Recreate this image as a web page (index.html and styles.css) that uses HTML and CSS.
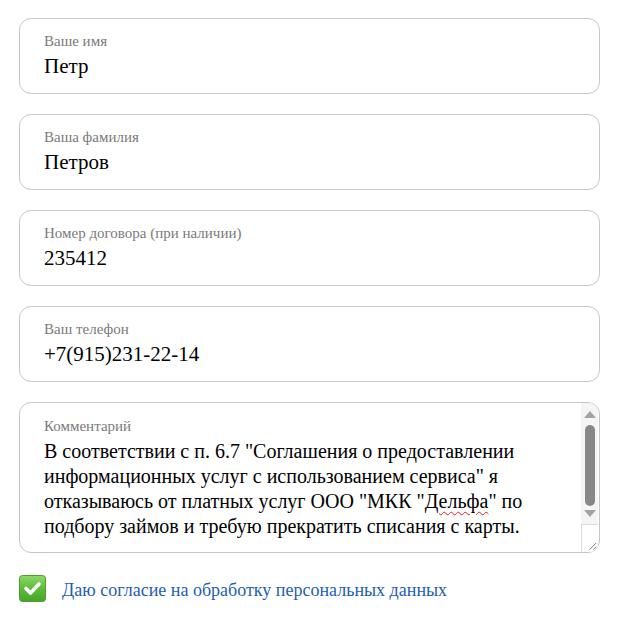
FILE: index.html
```html
<!DOCTYPE html>
<html>
<head>
<meta charset="utf-8">
<link rel="stylesheet" href="styles.css">
</head>
<body class="page">
<main class="form">
  <section class="field">
    <p class="label">Ваше имя</p>
    <p class="value">Петр</p>
  </section>
  <section class="field">
    <p class="label">Ваша фамилия</p>
    <p class="value">Петров</p>
  </section>
  <section class="field">
    <p class="label">Номер договора (при наличии)</p>
    <p class="value">235412</p>
  </section>
  <section class="field">
    <p class="label">Ваш телефон</p>
    <p class="value">+7(915)231-22-14</p>
  </section>
  <section class="field field-area">
    <p class="label">Комментарий</p>
    <p class="area-text">В соответствии с п. 6.7 "Соглашения о предоставлении<br>информационных услуг с использованием сервиса" я<br>отказываюсь от платных услуг ООО "МКК "<span class="spell">Дельфа</span>" по<br>подбору займов и требую прекратить списания с карты.</p>
    <div class="scrollbar">
      <div class="arrow-up"></div>
      <div class="track"><div class="thumb"></div></div>
      <div class="arrow-down"></div>
      <div class="resizer">
        <svg class="grip" width="17" height="17" viewBox="0 0 17 17">
          <path d="M8 15 L15 8 M12 15 L15 12" stroke="#777" stroke-width="1" fill="none"/>
        </svg>
      </div>
    </div>
  </section>
  <div class="consent">
    <svg class="check" width="27" height="27" viewBox="0 0 27 27">
      <defs>
        <linearGradient id="g" x1="0" y1="0" x2="0" y2="1">
          <stop offset="0" stop-color="#8fd86a"/>
          <stop offset="0.5" stop-color="#5cbd3a"/>
          <stop offset="1" stop-color="#45a526"/>
        </linearGradient>
      </defs>
      <rect x="0.5" y="0.5" width="26" height="26" rx="3" fill="url(#g)" stroke="#4a9e2c"/>
      <path d="M7 13.5 L11.5 18 L20 9" stroke="#fff" stroke-width="3.6" fill="none" stroke-linecap="round" stroke-linejoin="round"/>
    </svg>
    <p class="consent-text">Даю согласие на обработку персональных данных</p>
  </div>
</main>
</body>
</html>
```

FILE: styles.css
```css
.page {
  margin: 0;
  padding: 0;
  background: #fff;
}
.page,
.page * {
  font-family: "Liberation Serif", serif;
}
.form {
  display: flex;
  flex-direction: column;
  gap: 20px;
  width: 581px;
  margin: 0;
  padding: 18px 0 0 19px;
  color: #000;
}
.field {
  box-sizing: border-box;
  height: 76px;
  border: 1px solid #c6c6c6;
  border-radius: 12px;
  padding: 13px 24px 0 24px;
  background: #fff;
}
.label {
  margin: 0;
  font-size: 15px;
  line-height: 18px;
  color: #7a7a7a;
}
.value {
  margin: 4px 0 0 0;
  font-size: 21px;
  line-height: 24px;
}
.field-area {
  position: relative;
  height: 151px;
  overflow: hidden;
  padding-top: 14px;
}
.area-text {
  margin: 4px 0 0 0;
  font-size: 20px;
  line-height: 25px;
  white-space: nowrap;
}
.spell {
  text-decoration: underline wavy #e02020;
  text-decoration-thickness: 1px;
  text-underline-offset: 3px;
}
.scrollbar {
  position: absolute;
  top: 0;
  right: 1px;
  bottom: 0;
  width: 17px;
  background: #f5f5f5;
  display: flex;
  flex-direction: column;
  align-items: center;
}
.arrow-up {
  margin-top: 8px;
  width: 0;
  height: 0;
  border-left: 6px solid transparent;
  border-right: 6px solid transparent;
  border-bottom: 7px solid #a3a3a3;
}
.track {
  flex: 1;
  width: 100%;
  display: flex;
  justify-content: center;
  padding-top: 7px;
  padding-bottom: 4px;
}
.thumb {
  width: 10px;
  height: 81px;
  border-radius: 5px;
  background: #878787;
}
.arrow-down {
  width: 0;
  height: 0;
  margin-bottom: 7px;
  border-left: 6px solid transparent;
  border-right: 6px solid transparent;
  border-top: 7px solid #a3a3a3;
}
.resizer {
  width: 17px;
  height: 28px;
  box-sizing: border-box;
  border-top: 1px solid #dcdcdc;
  border-left: 1px solid #dcdcdc;
  background: #fff;
  display: flex;
  align-items: flex-end;
  justify-content: flex-end;
}
.grip {
  display: block;
}
.consent {
  display: flex;
  align-items: flex-start;
  gap: 16px;
  margin-top: 2px;
}
.check {
  display: block;
  flex: none;
}
.consent-text {
  margin: 4px 0 0 0;
  font-size: 18px;
  line-height: 22px;
  color: #1e5eb4;
}
```
